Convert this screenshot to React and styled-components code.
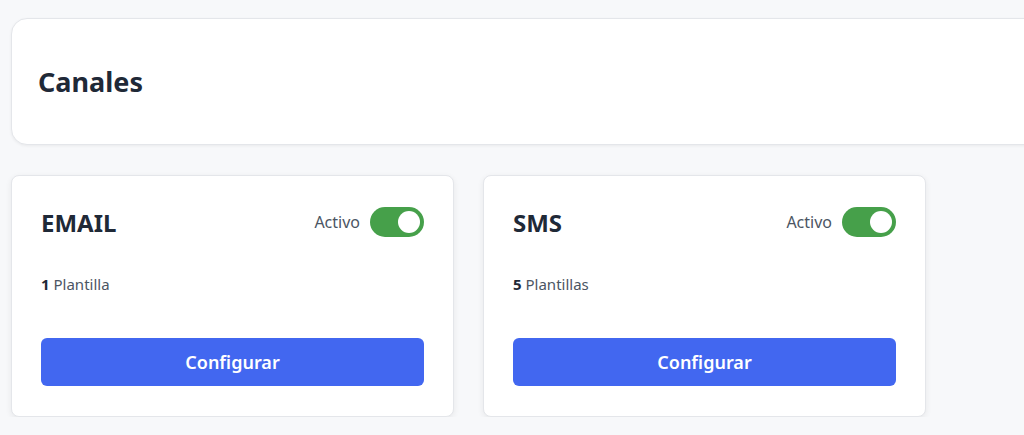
import React, { useState } from 'react';
import styled, { createGlobalStyle } from 'styled-components';

const GlobalStyle = createGlobalStyle`
  html, body {
    margin: 0;
    padding: 0;
    background: #f7f8fa;
    overflow: hidden;
  }
  body {
    font-family: "Noto Sans", "Open Sans", Arial, sans-serif;
    color: #1f2937;
  }
`;

const Page = styled.div`
  padding: 18px 0 0 11px;
  width: 1100px;
`;

const Header = styled.div`
  height: 125px;
  display: flex;
  align-items: center;
  padding: 0 26px;
  background: #fff;
  border: 1px solid #e4e6ea;
  border-radius: 16px;
  box-shadow: 0 1px 3px rgba(0, 0, 0, 0.06);
`;

const PageTitle = styled.h1`
  margin: 0;
  font-size: 27px;
  font-weight: 700;
  color: #1f2937;
`;

const Grid = styled.div`
  display: grid;
  grid-template-columns: repeat(2, 443px);
  gap: 29px;
  margin-top: 30px;
`;

const Card = styled.div`
  background: #fff;
  border: 1px solid #e4e6ea;
  border-radius: 8px;
  box-shadow: 0 2px 6px rgba(0, 0, 0, 0.07);
  padding: 31px 29px 30px 29px;
  display: flex;
  flex-direction: column;
`;

const CardHead = styled.div`
  display: flex;
  align-items: center;
  justify-content: space-between;
  height: 30px;
`;

const ChannelName = styled.h2`
  margin: 0;
  font-size: 24px;
  font-weight: 700;
  color: #1f2937;
`;

const Status = styled.label`
  display: flex;
  align-items: center;
  gap: 10px;
  font-size: 16px;
  color: #4b5563;
  cursor: pointer;
`;

const Switch = styled.span`
  position: relative;
  width: 54px;
  height: 30px;
  border-radius: 15px;
  background: ${({ $on }) => ($on ? '#46a04a' : '#cbd0d6')};
  transition: background 0.2s;

  &::after {
    content: '';
    position: absolute;
    top: 4px;
    left: ${({ $on }) => ($on ? '28px' : '4px')};
    width: 22px;
    height: 22px;
    border-radius: 50%;
    background: #fff;
    transition: left 0.2s;
  }
`;

const Count = styled.p`
  margin: 37px 0 0 0;
  font-size: 15px;
  color: #4b5563;
  line-height: 20px;

  strong {
    color: #1f2937;
    font-weight: 700;
  }
`;

const ConfigButton = styled.button`
  margin-top: 44px;
  height: 48px;
  width: 100%;
  border: none;
  border-radius: 6px;
  background: #4267f0;
  color: #fff;
  font-family: inherit;
  font-size: 18px;
  font-weight: 600;
  cursor: pointer;
`;

const channels = [
  { name: 'EMAIL', templates: 1 },
  { name: 'SMS', templates: 5 },
];

const ChannelCard = ({ name, templates }) => {
  const [on, setOn] = useState(true);
  return (
    <Card>
      <CardHead>
        <ChannelName>{name}</ChannelName>
        <Status onClick={() => setOn(!on)}>
          Activo
          <Switch $on={on} />
        </Status>
      </CardHead>
      <Count>
        <strong>{templates}</strong> {templates === 1 ? 'Plantilla' : 'Plantillas'}
      </Count>
      <ConfigButton>Configurar</ConfigButton>
    </Card>
  );
};

export default function App() {
  return (
    <>
      <GlobalStyle />
      <Page>
        <Header>
          <PageTitle>Canales</PageTitle>
        </Header>
        <Grid>
          {channels.map((c) => (
            <ChannelCard key={c.name} {...c} />
          ))}
        </Grid>
      </Page>
    </>
  );
}
